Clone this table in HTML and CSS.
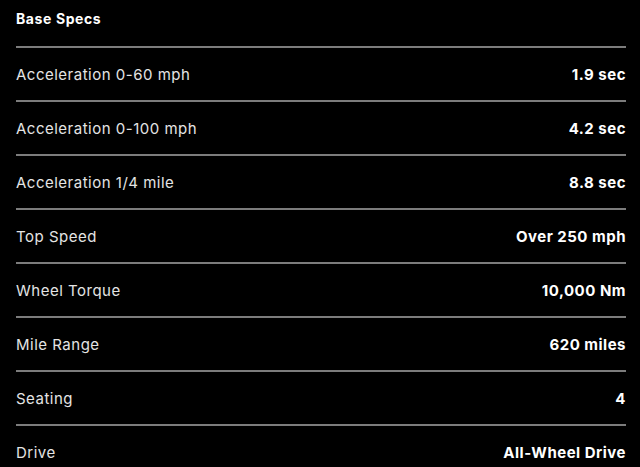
FILE: index.html
```html
<!DOCTYPE html>
<html>
<head>
<meta charset="utf-8">
<link rel="stylesheet" href="styles.css">
</head>
<body>
<section class="specs">
  <h2 class="specs-title">Base Specs</h2>
  <div class="row"><span class="label">Acceleration 0-60 mph</span><span class="value">1.9 sec</span></div>
  <div class="row"><span class="label">Acceleration 0-100 mph</span><span class="value">4.2 sec</span></div>
  <div class="row"><span class="label">Acceleration 1/4 mile</span><span class="value">8.8 sec</span></div>
  <div class="row"><span class="label">Top Speed</span><span class="value">Over 250 mph</span></div>
  <div class="row"><span class="label">Wheel Torque</span><span class="value">10,000 Nm</span></div>
  <div class="row"><span class="label">Mile Range</span><span class="value">620 miles</span></div>
  <div class="row"><span class="label">Seating</span><span class="value">4</span></div>
  <div class="row"><span class="label">Drive</span><span class="value">All-Wheel Drive</span></div>
</section>
</body>
</html>
```
FILE: styles.css
```css
html, body {
  margin: 0;
  padding: 0;
  background: #000;
}
body {
  font-family: Inter, "Noto Sans", sans-serif;
  color: #e6e6e6;
}
.specs {
  padding: 0 14px 0 16px;
}
.specs-title {
  margin: 0;
  height: 46px;
  box-sizing: border-box;
  padding-top: 8px;
  font-size: 14px;
  line-height: 22px;
  font-weight: 700;
  letter-spacing: 0.6px;
  color: #fff;
}
.row {
  display: flex;
  justify-content: space-between;
  align-items: center;
  height: 54px;
  box-sizing: border-box;
  border-top: 2px solid #7c7c7c;
  font-size: 15px;
  letter-spacing: 0.5px;
}
.label {
  color: #e4e4e4;
}
.value {
  font-weight: 700;
  color: #fff;
}
```
